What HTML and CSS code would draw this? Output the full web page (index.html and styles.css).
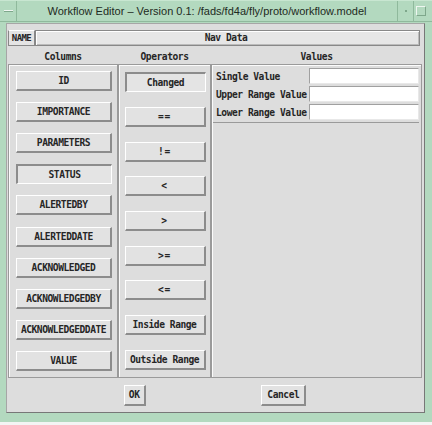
FILE: index.html
```html
<!DOCTYPE html>
<html>
<head>
<meta charset="utf-8">
<link rel="stylesheet" href="styles.css">
</head>
<body>
<div class="win">
  <div class="titlebar">
    <div class="tb-menu"><span class="dash"></span></div>
    <div class="tb-title">Workflow Editor – Version 0.1: /fads/fd4a/fly/proto/workflow.model</div>
    <div class="tb-min"><span class="dot"></span></div>
    <div class="tb-max"><span class="sq"></span></div>
  </div>
  <div class="frame">
    <div class="body">
      <div class="name-row">
        <div class="name-label">NAME</div>
        <div class="name-field">Nav Data</div>
      </div>
      <div class="grid">
        <div class="hdr">Columns</div>
        <div class="hdr">Operators</div>
        <div class="hdr">Values</div>
        <div class="panel cols">
          <div class="btn">ID</div>
          <div class="btn">IMPORTANCE</div>
          <div class="btn">PARAMETERS</div>
          <div class="btn pressed">STATUS</div>
          <div class="btn">ALERTEDBY</div>
          <div class="btn">ALERTEDDATE</div>
          <div class="btn">ACKNOWLEDGED</div>
          <div class="btn">ACKNOWLEDGEDBY</div>
          <div class="btn">ACKNOWLEDGEDDATE</div>
          <div class="btn">VALUE</div>
        </div>
        <div class="panel ops">
          <div class="btn pressed">Changed</div>
          <div class="btn sym">==</div>
          <div class="btn sym">!=</div>
          <div class="btn sym">&lt;</div>
          <div class="btn sym">&gt;</div>
          <div class="btn sym">&gt;=</div>
          <div class="btn sym">&lt;=</div>
          <div class="btn">Inside Range</div>
          <div class="btn">Outside Range</div>
        </div>
        <div class="panel vals">
          <div class="val-box">
            <div class="val-row"><span class="val-label">Single Value</span><span class="val-input"></span></div>
            <div class="val-row"><span class="val-label">Upper Range Value</span><span class="val-input"></span></div>
            <div class="val-row"><span class="val-label">Lower Range Value</span><span class="val-input"></span></div>
          </div>
        </div>
      </div>
      <div class="footer">
        <div class="btn fbtn">OK</div>
        <div class="btn fbtn">Cancel</div>
      </div>
    </div>
  </div>
</div>
</body>
</html>
```

FILE: styles.css
```css
* { box-sizing: border-box; }
html, body { margin: 0; padding: 0; }
body {
  width: 432px;
  height: 425px;
  overflow: hidden;
  background: #b3d9bf;
  font-family: "DejaVu Sans Mono", "Liberation Mono", monospace;
  font-weight: bold;
  font-size: 9.6px;
  letter-spacing: -0.45px;
  color: #262626;
}
.win {
  width: 432px;
  height: 425px;
  background: #b3d9bf;
  display: flex;
  flex-direction: column;
  border-bottom: 3px solid #f4f4f4;
}
.titlebar {
  height: 22px;
  display: flex;
  align-items: stretch;
  background: #b3d9bf;
  border-top: 1px solid #c8e6d1;
  border-bottom: 1px solid #8fb99c;
  padding-right: 4px;
}
.tb-menu {
  width: 17px;
  border-right: 1px solid #8fb99c;
  display: flex;
  align-items: center;
  justify-content: center;
}
.dash {
  display: block;
  width: 9px;
  height: 2px;
  background: #f0f6f2;
  border-bottom: 1px solid #7ea78b;
}
.tb-title {
  flex: 1;
  text-align: center;
  font-family: "Liberation Sans", Arial, sans-serif;
  font-weight: normal;
  font-size: 11px;
  letter-spacing: 0;
  line-height: 20px;
  color: #1e2a22;
  white-space: nowrap;
  overflow: hidden;
}
.tb-min {
  width: 16px;
  border-left: 1px solid #8fb99c;
  display: flex;
  align-items: center;
  justify-content: center;
}
.dot {
  display: block;
  width: 2px;
  height: 2px;
  background: #7ea78b;
}
.tb-max {
  width: 15px;
  border-left: 1px solid #8fb99c;
  display: flex;
  align-items: center;
  justify-content: center;
}
.sq {
  display: block;
  width: 10px;
  height: 10px;
  border-top: 1px solid #eef6f0;
  border-left: 1px solid #eef6f0;
  border-bottom: 1px solid #7ea78b;
  border-right: 1px solid #7ea78b;
}
.frame {
  flex: 1;
  padding: 1px 7px 8px 6px;
}
.body {
  height: 390px;
  background: #dddddd;
  border: 1px solid #a6a6a6;
  border-right-color: #777;
  border-bottom-color: #777;
  padding: 6px 2px 0 1px;
  display: flex;
  flex-direction: column;
}
.name-row {
  display: flex;
  height: 16px;
}
.name-label {
  width: 27px;
  background: #e4e4e4;
  border-top: 1px solid #fff;
  border-left: 1px solid #888;
  border-right: 1px solid #888;
  border-bottom: 1px solid #888;
  font-size: 9px;
  letter-spacing: -0.6px;
  line-height: 14px;
  text-align: center;
}
.name-field {
  flex: 1;
  margin-right: 2px;
  background: #e6e6e6;
  border: 1px solid #888;
  box-shadow: inset 1px 1px 0 #fff, inset -1px -1px 0 #bbb;
  line-height: 14px;
  text-align: center;
  padding-right: 3px;
}
.grid {
  display: grid;
  grid-template-columns: 110px 93px 1fr;
  grid-template-rows: 18px 314px;
}
.hdr {
  text-align: center;
  line-height: 18px;
  padding-top: 2px;
}
.panel {
  border: 1px solid #9a9a9a;
  box-shadow: inset 1px 1px 0 #fbfbfb;
}
.cols, .ops {
  display: flex;
  flex-direction: column;
  justify-content: space-around;
  align-items: center;
}
.cols { padding-left: 2px; }
.ops { padding-left: 1px; }
.btn {
  height: 20px;
  background: #e2e2e2;
  border-top: 1px solid #fff;
  border-left: 1px solid #fff;
  border-right: 2px solid #8c8c8c;
  border-bottom: 2px solid #8c8c8c;
  text-align: center;
  line-height: 17px;
  white-space: nowrap;
}
.btn.sym { letter-spacing: 0.6px; }
.cols .btn { width: 96px; }
.ops .btn { width: 81px; }
.btn.pressed {
  border-top: 2px solid #8c8c8c;
  border-left: 2px solid #8c8c8c;
  border-right: 1px solid #fff;
  border-bottom: 1px solid #fff;
  background: #e4e4e4;
}
.vals {
  padding: 1px 2px 0 1px;
}
.val-box {
  border-bottom: 1px solid #9a9a9a;
  padding: 1px 0 1px 3px;
}
.val-row {
  display: flex;
  align-items: center;
  height: 18px;
}
.val-label {
  width: 93px;
  white-space: nowrap;
}
.val-input {
  flex: 1;
  height: 16px;
  background: #fff;
  border: 1px solid #a0a0a0;
  border-right-color: #e8e8e8;
  border-bottom-color: #e8e8e8;
}
.footer {
  flex: 1;
  display: flex;
  justify-content: space-evenly;
  align-items: center;
  padding-top: 1px;
}
.fbtn {
  height: 21px;
  line-height: 18px;
}
.fbtn:first-child { width: 22px; }
.fbtn:last-child { width: 45px; }
```
